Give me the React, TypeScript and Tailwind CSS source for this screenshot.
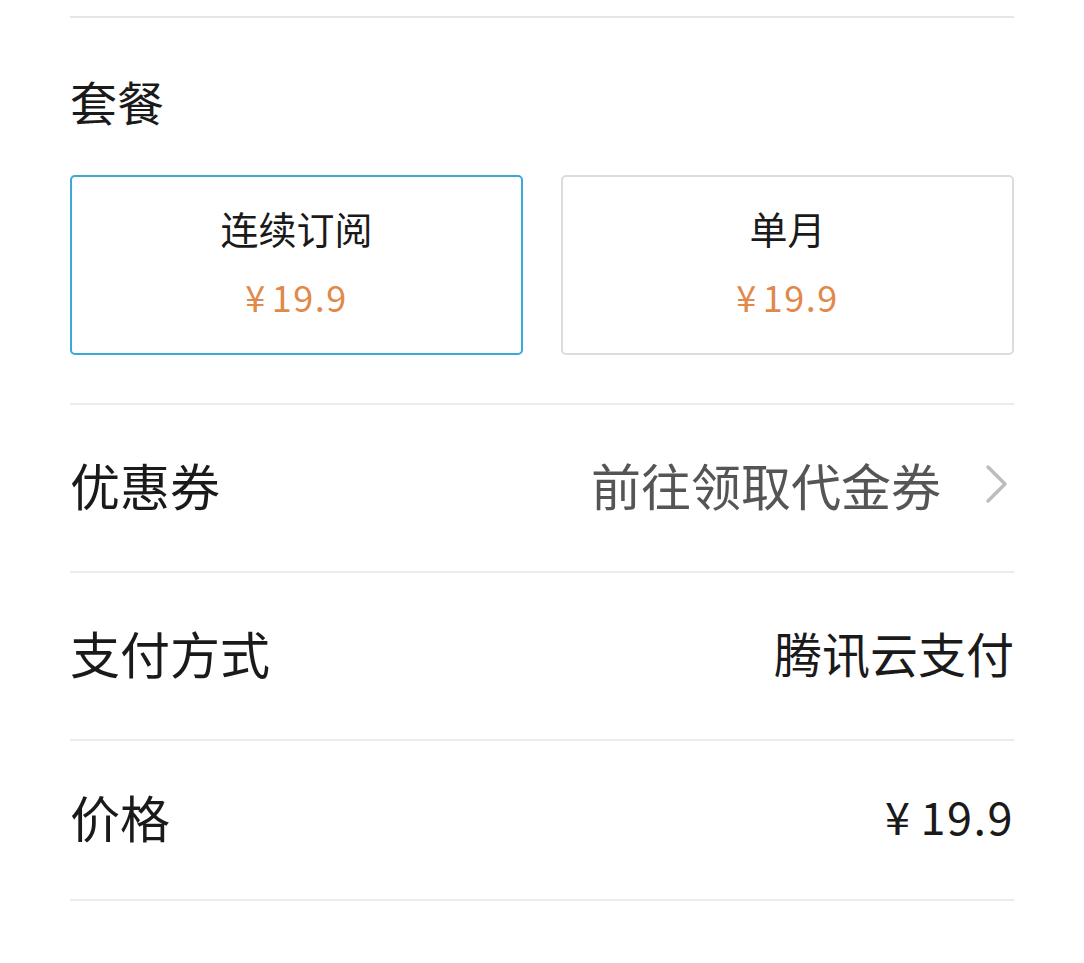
const font = {
  fontFamily: '"Noto Sans CJK SC", "Noto Sans", sans-serif',
};

function PlanCard({ title, active }: { title: string; active?: boolean }) {
  return (
    <div
      className={`h-[180px] rounded-[5px] border-2 flex flex-col items-center pt-[31px] ${
        active ? "border-[#3aa9d7]" : "border-[#dcdcdc]"
      }`}
    >
      <div className="text-[38px] leading-[40px] text-[#1a1a1a]">{title}</div>
      <div className="mt-[28px] text-[36px] leading-[40px] text-[#e0894b] tracking-[1.5px]">
        <span className="mr-[5px]">¥</span>19.9
      </div>
    </div>
  );
}

function Row({
  label,
  children,
  last,
}: {
  label: string;
  children: React.ReactNode;
  last?: boolean;
}) {
  return (
    <div
      className={`flex items-center justify-between border-t-2 border-[#ebebeb] pb-[8px] ${
        last ? "h-[162px] border-b-2" : "h-[168px]"
      }`}
    >
      <div className="text-[50px] leading-[56px] text-[#1a1a1a]">{label}</div>
      {children}
    </div>
  );
}

export default function App() {
  return (
    <div className="min-h-[963px] w-[1084px] bg-white" style={font}>
      <div className="px-[70px] pt-[16px]">
        <div className="border-t-2 border-[#e6e6e6]" />
        <div className="pt-[58px] text-[47px] leading-[50px] text-[#1a1a1a]">
          套餐
        </div>
        <div className="mt-[49px] grid grid-cols-2 gap-[38px]">
          <PlanCard title="连续订阅" active />
          <PlanCard title="单月" />
        </div>
        <div className="mt-[48px]">
          <Row label="优惠券">
            <div className="flex items-center">
              <span className="text-[50px] leading-[56px] text-[#555555]">
                前往领取代金券
              </span>
              <svg
                width="24"
                height="40"
                viewBox="0 0 24 40"
                className="ml-[44px] mr-[5px]"
              >
                <path
                  d="M3 3 L20 20 L3 37"
                  fill="none"
                  stroke="#bdbdbd"
                  strokeWidth="3.5"
                  strokeLinecap="round"
                  strokeLinejoin="round"
                />
              </svg>
            </div>
          </Row>
          <Row label="支付方式">
            <span className="text-[48px] leading-[56px] text-[#1a1a1a]">
              腾讯云支付
            </span>
          </Row>
          <Row label="价格" last>
            <span className="text-[45px] leading-[56px] text-[#1a1a1a] tracking-[1.5px]">
              <span className="mr-[9px]">¥</span>19.9
            </span>
          </Row>
        </div>
      </div>
    </div>
  );
}
